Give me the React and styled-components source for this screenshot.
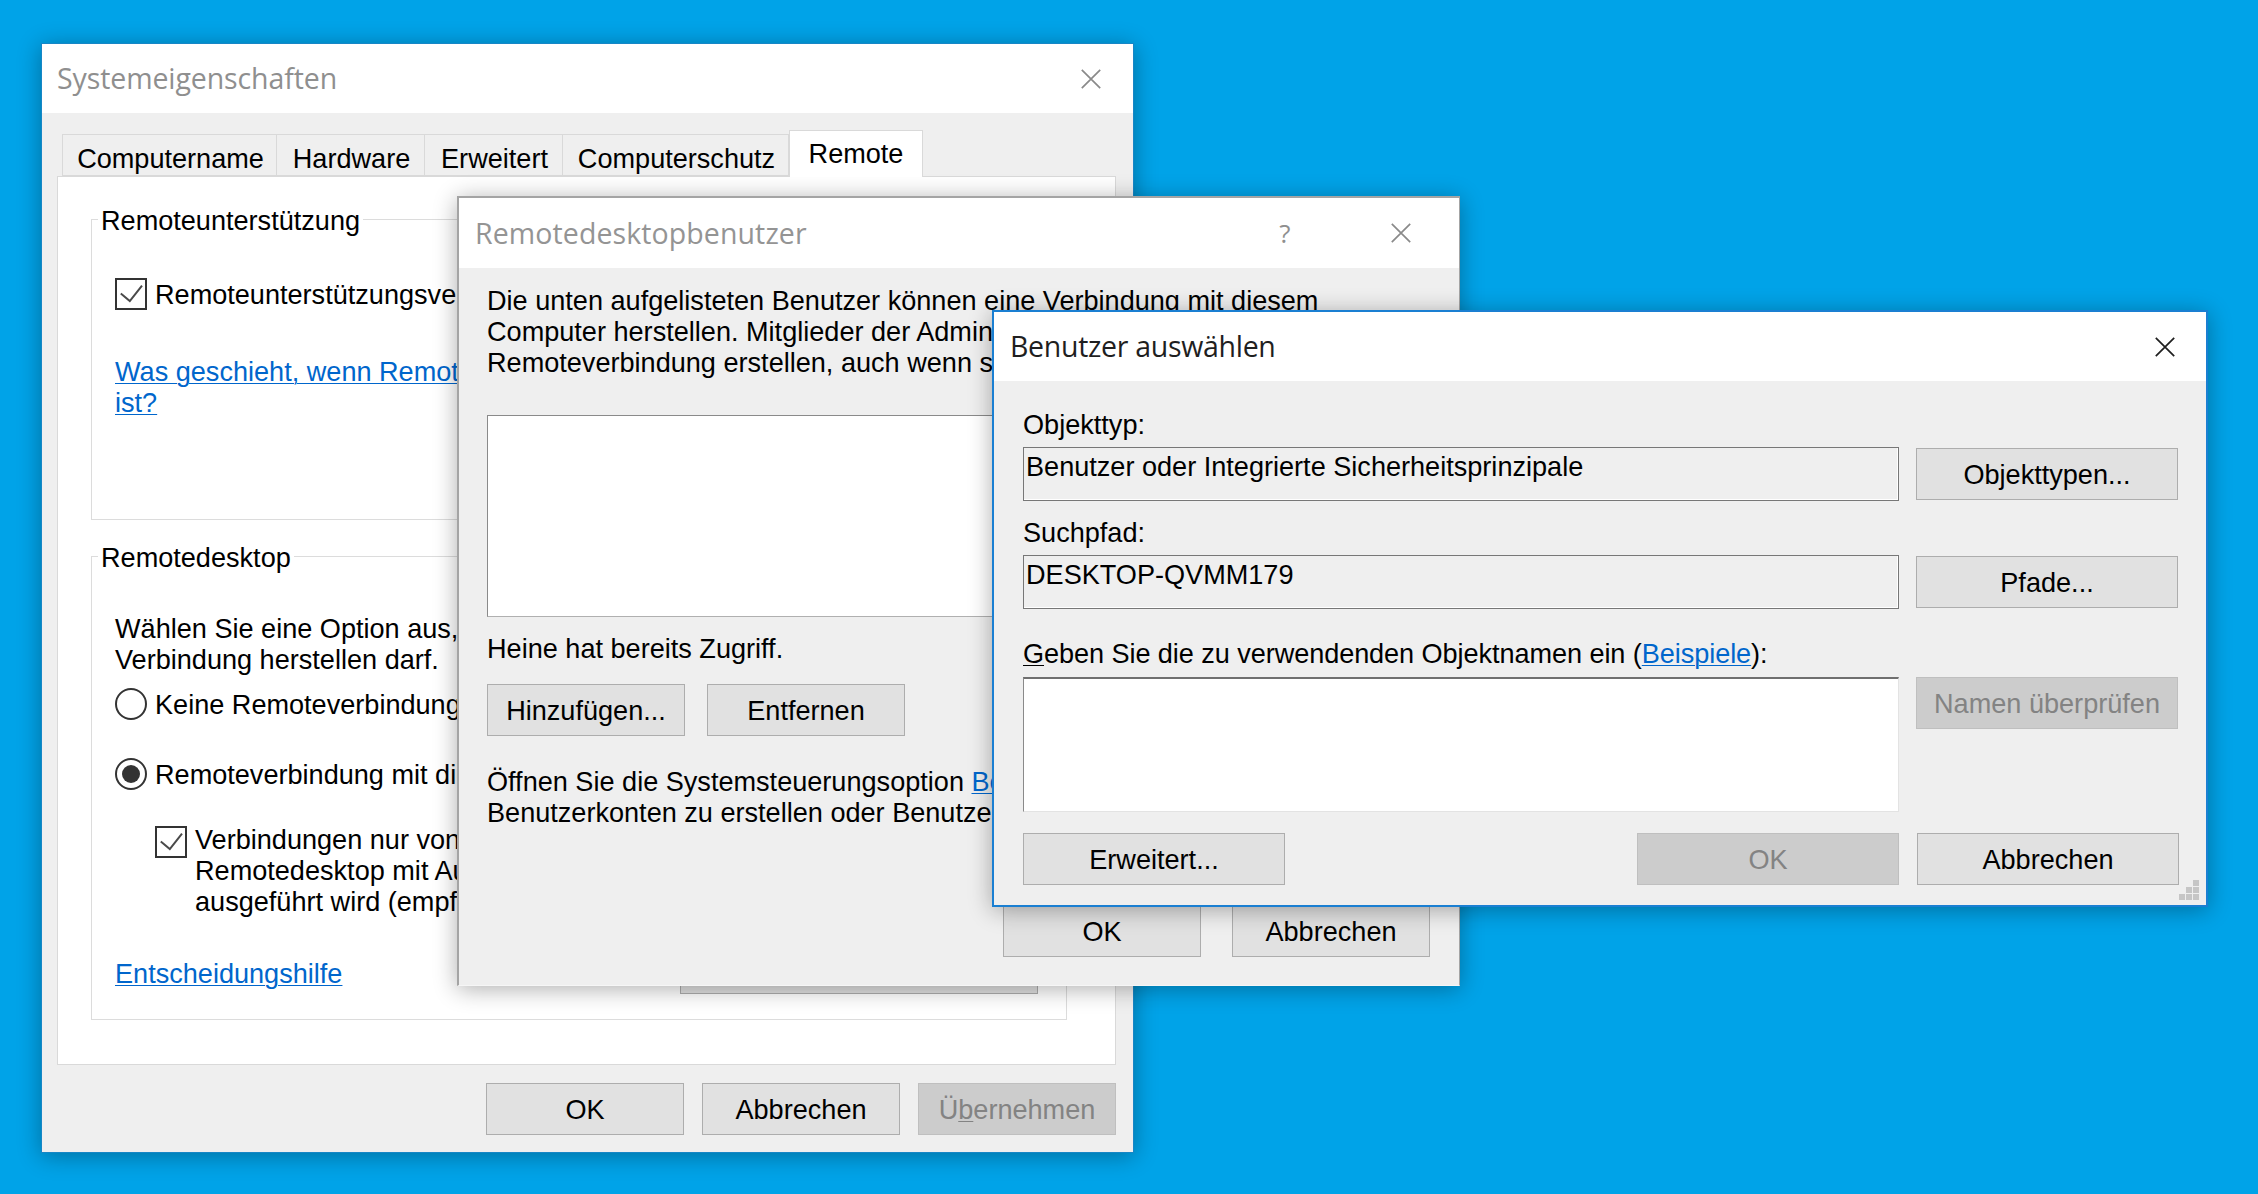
import React from "react";
import styled, { createGlobalStyle } from "styled-components";

const GlobalStyle = createGlobalStyle`
  html, body {
    margin: 0;
    padding: 0;
    overflow: hidden;
  }
  * {
    box-sizing: border-box;
  }
`;

const Desktop = styled.div`
  position: relative;
  width: 2258px;
  height: 1194px;
  overflow: hidden;
  background-color: #00a3e8;
  font-family: "Liberation Sans", Arial, sans-serif;
  font-size: 27.1px;
  line-height: 31px;
  color: #000;
`;

const Win = styled.section`
  position: absolute;
  left: ${(p) => p.$x}px;
  top: ${(p) => p.$y}px;
  width: ${(p) => p.$w}px;
  height: ${(p) => p.$h}px;
  display: flex;
  flex-direction: column;
  background-color: #efefef;
  border: ${(p) => p.$border};
  box-shadow: 0 3px 22px rgba(0, 0, 0, 0.32);
`;

const UsersWin = styled(Win)`
  border-top-width: 2px;
  border-left-width: 2px;
  border-color: #a4a4a4;
  border-bottom-color: #f6f6f6;
`;

const TitleBar = styled.header`
  flex: none;
  height: ${(p) => p.$h}px;
  display: flex;
  align-items: center;
  padding: 0 ${(p) => p.$pr}px 0 ${(p) => p.$pl}px;
  background-color: #fff;
  font-family: "Open Sans", "Noto Sans", sans-serif;
  font-size: 28.5px;
  letter-spacing: ${(p) => p.$ls}px;
  color: ${(p) => p.$color};
`;

const TitleText = styled.h1`
  margin: 0 auto 0 0;
  font: inherit;
`;

const HelpMark = styled.span`
  width: 24px;
  margin-right: 94px;
  text-align: center;
  font-size: 26px;
  color: #8f8f8f;
`;

const CloseIcon = styled.svg`
  display: block;
  flex: none;
  width: 20px;
  height: 20px;
  stroke: ${(p) => p.$color};
  stroke-width: 1.7;
  fill: none;
`;

function Close({ color }) {
  return (
    <CloseIcon viewBox="0 0 20 20" $color={color}>
      <path d="M0.8 0.8 19.2 19.2M19.2 0.8 0.8 19.2" />
    </CloseIcon>
  );
}

/* Systemeigenschaften */
const SystemBody = styled.div`
  flex: 1;
  display: flex;
  flex-direction: column;
  padding: 17px 17px 0 15px;
`;

const TabRow = styled.div`
  display: flex;
  align-items: flex-end;
  height: 46px;
  padding-left: 5px;
`;

const Tab = styled.div`
  position: relative;
  z-index: ${(p) => (p.$active ? 1 : 0)};
  width: ${(p) => p.$w}px;
  height: ${(p) => (p.$active ? 47 : 42)}px;
  margin-bottom: ${(p) => (p.$active ? -1 : 0)}px;
  padding: ${(p) => (p.$active ? "7px 0 0" : "8px 0 0 2px")};
  text-align: center;
  white-space: nowrap;
  background-color: ${(p) => (p.$active ? "#fff" : "transparent")};
  border: 1px solid #d9d9d9;
  border-left-width: ${(p) => (p.$first || p.$active ? 1 : 0)}px;
  border-bottom: ${(p) => (p.$active ? "none" : "1px solid #d9d9d9")};
`;

const TabPanel = styled.div`
  height: 889px;
  display: flex;
  flex-direction: column;
  gap: 21px;
  padding: 27px 48px 0 33px;
  background-color: #fff;
  border: 1px solid #d9d9d9;
`;

const Group = styled.fieldset`
  display: flex;
  flex-direction: column;
  align-items: flex-start;
  height: ${(p) => p.$h}px;
  margin: 0;
  padding: 0 28px 0 23px;
  min-width: 0;
  border: 1px solid #dcdcdc;
`;

const GroupTitle = styled.legend`
  margin-left: -17px;
  padding: 1px 3px 0;
  height: 31px;
`;

const OptionRow = styled.label`
  display: flex;
  align-items: ${(p) => (p.$top ? "flex-start" : "center")};
  gap: 8px;
  white-space: nowrap;
  margin-top: ${(p) => p.$mt || 0}px;
  margin-left: ${(p) => p.$ml || 0}px;
`;

const Box = styled.span`
  flex: none;
  display: flex;
  width: 32px;
  height: 32px;
  margin-top: ${(p) => (p.$top ? 2 : 0)}px;
  background-color: #fff;
  border: 2px solid #333;
`;

const BoxTick = styled.svg`
  width: 28px;
  height: 28px;
  stroke: #4a4a4a;
  stroke-width: 2;
  fill: none;
`;

function CheckBox({ top }) {
  return (
    <Box $top={top}>
      <BoxTick viewBox="0 0 28 28">
        <path d="M3.8 13.5 12.8 21 25 5.7" />
      </BoxTick>
    </Box>
  );
}

const Radio = styled.span`
  flex: none;
  display: flex;
  align-items: center;
  justify-content: center;
  width: 32px;
  height: 32px;
  background-color: #fff;
  border: 2px solid #333;
  border-radius: 50%;

  &::after {
    content: "";
    display: ${(p) => (p.$on ? "block" : "none")};
    width: 18px;
    height: 18px;
    border-radius: 50%;
    background-color: #333;
  }
`;

const Para = styled.p`
  margin: ${(p) => p.$mt || 0}px 0 0;
  white-space: nowrap;
`;

const Link = styled.a`
  color: #0066cc;
  text-decoration: underline;
  text-underline-offset: 2px;
  text-decoration-thickness: 1px;
`;

const Key = styled.span`
  text-decoration: underline;
  text-underline-offset: 2px;
  text-decoration-thickness: 1px;
`;

const GroupFooter = styled.div`
  align-self: stretch;
  display: flex;
  align-items: center;
  justify-content: space-between;
  margin-top: 25px;
`;

const FooterLink = styled.div`
  padding-top: 10px;
`;

const Btn = styled.button`
  flex: none;
  width: ${(p) => p.$w}px;
  height: ${(p) => p.$h || 52}px;
  margin: ${(p) => p.$m || 0};
  padding: 0;
  font: inherit;
  white-space: nowrap;
  color: ${(p) => (p.disabled ? "#838383" : "#000")};
  background-color: ${(p) => (p.disabled ? "#cccccc" : "#e1e1e1")};
  border: 1px solid ${(p) => (p.disabled ? "#bfbfbf" : "#adadad")};
  border-radius: 0;
`;

const ButtonRow = styled.div`
  display: flex;
  justify-content: ${(p) => p.$justify || "flex-end"};
  gap: ${(p) => p.$gap}px;
  margin-top: ${(p) => p.$mt};
`;

/* Remotedesktopbenutzer */
const UsersBody = styled.div`
  flex: 1;
  display: flex;
  flex-direction: column;
  padding: 17px 29px 28px 28px;
`;

const UserList = styled.div`
  height: 202px;
  margin-top: 37px;
  background-color: #fff;
  border: 1px solid #8a8a8a;
  border-right-color: #dcdcdc;
  border-bottom-color: #b0b0b0;
`;

/* Benutzer auswählen */
const PickerBody = styled.div`
  position: relative;
  flex: 1;
  display: grid;
  grid-template-columns: 1fr 262px;
  grid-auto-rows: min-content;
  column-gap: 17px;
  padding: 28px 28px 0 29px;
`;

const FormLabel = styled.label`
  grid-column: 1 / -1;
  height: 31px;
  margin-top: ${(p) => p.$mt || 0}px;
  letter-spacing: ${(p) => p.$ls || 0}px;
`;

const ReadField = styled.div`
  height: 54px;
  margin-top: 7px;
  padding: 3px 0 0 2px;
  white-space: nowrap;
  border: 1px solid #777;
  box-shadow: inset -1px -1px 0 #fff;
`;

const NameInput = styled.div`
  height: 135px;
  margin-top: 8px;
  background-color: #fff;
  border: 1px solid #e3e3e3;
  border-top: 2px solid #6f6f6f;
  border-left: 1px solid #8a8a8a;
`;

const PickerFooter = styled.div`
  grid-column: 1 / -1;
  display: flex;
  gap: 18px;
  margin-top: 21px;
`;

const GripMark = styled.svg`
  position: absolute;
  right: 7px;
  bottom: 5px;
  width: 20px;
  height: 20px;
  fill: #c6c6c6;
`;

function Grip() {
  return (
    <GripMark viewBox="0 0 20 20">
      <rect x="14" y="0" width="6" height="6" />
      <rect x="7" y="7" width="6" height="6" />
      <rect x="14" y="7" width="6" height="6" />
      <rect x="0" y="14" width="6" height="6" />
      <rect x="7" y="14" width="6" height="6" />
      <rect x="14" y="14" width="6" height="6" />
    </GripMark>
  );
}

function SystemWindow() {
  return (
    <Win $x={41} $y={43} $w={1093} $h={1110} $border="1px solid #1786c6">
      <TitleBar $h={69} $pl={15} $pr={32} $ls={-0.1} $color="#8f8f8f">
        <TitleText>Systemeigenschaften</TitleText>
        <Close color="#8a8a8a" />
      </TitleBar>
      <SystemBody>
        <TabRow>
          <Tab $w={215} $first>
            Computername
          </Tab>
          <Tab $w={148}>Hardware</Tab>
          <Tab $w={138}>Erweitert</Tab>
          <Tab $w={226}>Computerschutz</Tab>
          <Tab $w={134} $active>
            Remote
          </Tab>
        </TabRow>
        <TabPanel>
          <Group $h={316}>
            <GroupTitle>Remoteunterstützung</GroupTitle>
            <OptionRow $mt={43}>
              <CheckBox />
              Remoteunterstützungsverbindungen mit diesem Computer zulassen
            </OptionRow>
            <Para $mt={46}>
              <Link>
                Was geschieht, wenn Remoteunterstützung aktiviert
                <br />
                ist?
              </Link>
            </Para>
          </Group>
          <Group $h={479}>
            <GroupTitle>Remotedesktop</GroupTitle>
            <Para $mt={41}>
              Wählen Sie eine Option aus, und geben Sie an, wer eine
              <br />
              Verbindung herstellen darf.
            </Para>
            <OptionRow $mt={13}>
              <Radio />
              Keine Remoteverbindung mit diesem Computer zulassen
            </OptionRow>
            <OptionRow $mt={38}>
              <Radio $on />
              Remoteverbindung mit diesem Computer zulassen
            </OptionRow>
            <OptionRow $mt={34} $ml={40} $top>
              <CheckBox top />
              <span>
                Verbindungen nur von Computern zulassen, auf denen
                <br />
                Remotedesktop mit Authentifizierung auf Netzwerkebene
                <br />
                ausgeführt wird (empfohlen)
              </span>
            </OptionRow>
            <GroupFooter>
              <FooterLink>
                <Link>Entscheidungshilfe</Link>
              </FooterLink>
              <Btn $w={358}>Benutzer auswählen...</Btn>
            </GroupFooter>
          </Group>
        </TabPanel>
        <ButtonRow $gap={18} $mt="18px">
          <Btn $w={198}>OK</Btn>
          <Btn $w={198}>Abbrechen</Btn>
          <Btn $w={198} disabled>
            Ü<Key>b</Key>ernehmen
          </Btn>
        </ButtonRow>
      </SystemBody>
    </Win>
  );
}

function UsersWindow() {
  return (
    <UsersWin $x={457} $y={196} $w={1003} $h={790} $border="1px solid #a4a4a4">
      <TitleBar $h={70} $pl={16} $pr={48} $ls={0.1} $color="#949494">
        <TitleText>Remotedesktopbenutzer</TitleText>
        <HelpMark>?</HelpMark>
        <Close color="#8a8a8a" />
      </TitleBar>
      <UsersBody>
        <Para>
          Die unten aufgelisteten Benutzer können eine Verbindung mit diesem
          <br />
          Computer herstellen. Mitglieder der Administratorengruppe können
          <br />
          Remoteverbindung erstellen, auch wenn sie nicht aufgelistet sind.
        </Para>
        <UserList />
        <Para $mt={16}>Heine hat bereits Zugriff.</Para>
        <ButtonRow $justify="flex-start" $gap={22} $mt="20px">
          <Btn $w={198}>Hinzufügen...</Btn>
          <Btn $w={198}>Entfernen</Btn>
        </ButtonRow>
        <Para $mt={30}>
          Öffnen Sie die Systemsteuerungsoption <Link>Benutzerkonten</Link>, um
          neue
          <br />
          Benutzerkonten zu erstellen oder Benutzer zu Gruppen hinzuzufügen.
        </Para>
        <ButtonRow $gap={31} $mt="auto">
          <Btn $w={198}>OK</Btn>
          <Btn $w={198}>Abbrechen</Btn>
        </ButtonRow>
      </UsersBody>
    </UsersWin>
  );
}

function PickerWindow() {
  return (
    <Win $x={992} $y={310} $w={1216} $h={597} $border="2px solid #1a7fd2">
      <TitleBar $h={69} $pl={16} $pr={31} $ls={-0.3} $color="#1f1f1f">
        <TitleText>Benutzer auswählen</TitleText>
        <Close color="#1f1f1f" />
      </TitleBar>
      <PickerBody>
        <FormLabel>Objekttyp:</FormLabel>
        <ReadField>Benutzer oder Integrierte Sicherheitsprinzipale</ReadField>
        <Btn $w={262} $m="8px 0 0">
          Objekttypen...
        </Btn>
        <FormLabel $mt={16}>Suchpfad:</FormLabel>
        <ReadField>DESKTOP-QVMM179</ReadField>
        <Btn $w={262} $m="8px 0 0">
          Pfade...
        </Btn>
        <FormLabel $mt={29} $ls={-0.07}>
          <Key>G</Key>eben Sie die zu verwendenden Objektnamen ein (
          <Link>Beispiele</Link>):
        </FormLabel>
        <NameInput />
        <Btn $w={262} $m="8px 0 0" disabled>
          Namen überprüfen
        </Btn>
        <PickerFooter>
          <Btn $w={262} $m="0 334px 0 0">
            Erweitert...
          </Btn>
          <Btn $w={262} disabled>
            OK
          </Btn>
          <Btn $w={262}>Abbrechen</Btn>
        </PickerFooter>
        <Grip />
      </PickerBody>
    </Win>
  );
}

export default function App() {
  return (
    <Desktop>
      <GlobalStyle />
      <SystemWindow />
      <UsersWindow />
      <PickerWindow />
    </Desktop>
  );
}
